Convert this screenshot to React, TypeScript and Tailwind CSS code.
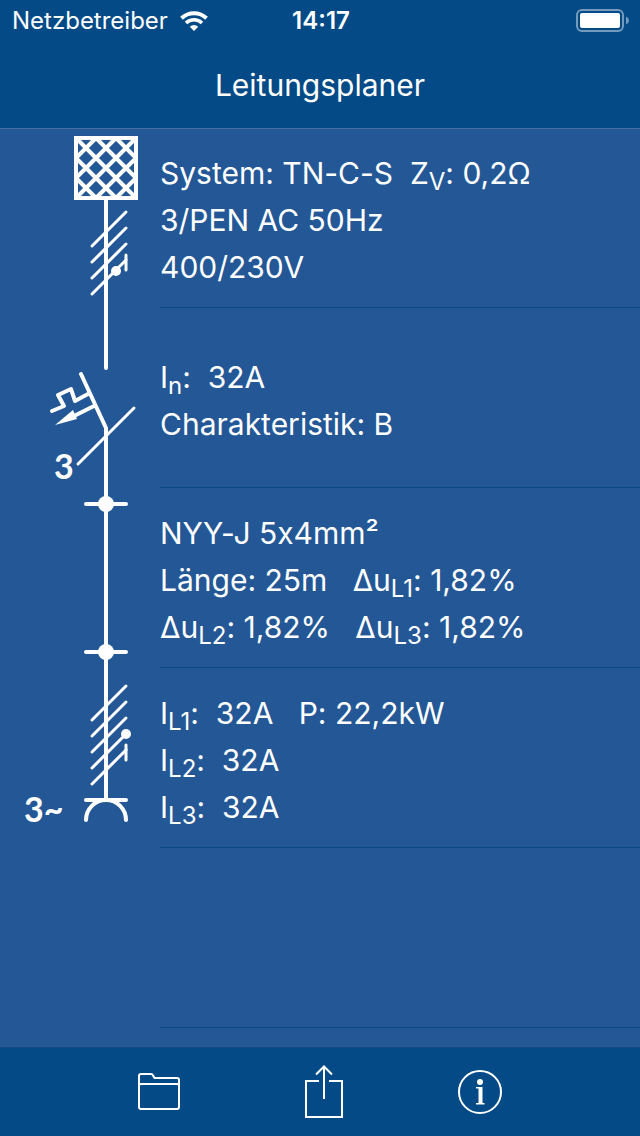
import type { ReactNode } from "react";

const Sub = ({ children }: { children: ReactNode }) => (
  <sub className="text-[24px]">{children}</sub>
);

const Node = ({ y }: { y: number }) => (
  <>
    <line x1="86" y1={y} x2="126" y2={y} />
    <circle cx="106" cy={y} r="8" fill="currentColor" stroke="none" />
  </>
);

// parallel strokes across the wire, one for each conductor
const Slashes = ({ from, count }: { from: number; count: number }) => (
  <g strokeWidth="3">
    {Array.from({ length: count }, (_, i) => (
      <line key={i} x1="92" y1={from + 34 + i * 16} x2="126" y2={from + i * 16} />
    ))}
  </g>
);

const GridSymbol = () => (
  <>
    <rect x="76" y="10" width="60" height="60" strokeLinejoin="miter" />
    <path
      strokeLinecap="butt"
      d="M96 10L76 30M116 10L76 50M136 10L76 70M136 30L96 70M136 50L116 70M116 10L136 30M96 10L136 50M76 10L136 70M76 30L116 70M76 50L96 70"
    />
    <line x1="106" y1="72" x2="106" y2="180" strokeLinecap="butt" />
    <Slashes from={84} count={4} />
    <circle cx="116" cy="143" r="5" fill="currentColor" stroke="none" />
    <line x1="126" y1="127" x2="126" y2="142" strokeWidth="3" />
  </>
);

const BreakerSymbol = () => (
  <>
    <line x1="106" y1="0" x2="106" y2="60" />
    <path d="M81 66L106 120V180" />
    <path d="M52 103L64 98L58 87L71 81L75 93L88 86" />
    <path d="M94 98L74 108" />
    <path d="M55 117L73 102L77 111Z" fill="currentColor" stroke="none" />
    <line x1="78" y1="156" x2="134" y2="100" strokeWidth="3" />
    <text x="54" y="171" className="font-['Lato',sans-serif] text-[34px] font-bold" fill="currentColor" stroke="none">3</text>
  </>
);

const CableSymbol = () => (
  <>
    <line x1="106" y1="0" x2="106" y2="180" strokeLinecap="butt" />
    <Node y={16} />
    <Node y={164} />
  </>
);

const SocketSymbol = () => (
  <>
    <line x1="106" y1="0" x2="106" y2="132" strokeLinecap="butt" />
    <Slashes from={18} count={5} />
    <circle cx="126" cy="66" r="5" fill="currentColor" stroke="none" />
    <line x1="126" y1="77" x2="126" y2="92" strokeWidth="3" />
    <line x1="86" y1="132" x2="126" y2="132" />
    <path d="M86 152A20 20 0 0 1 126 152" />
    <text x="24" y="154" className="font-['Lato',sans-serif] text-[34px] font-bold" fill="currentColor" stroke="none">3~</text>
  </>
);

const Row = ({ symbol, children }: { symbol?: ReactNode; children?: ReactNode }) => (
  <li className="flex">
    <svg
      viewBox="0 0 160 180"
      className="h-[180px] w-40 shrink-0"
      fill="none"
      stroke="currentColor"
      strokeWidth="4"
      strokeLinecap="round"
      strokeLinejoin="round"
      aria-hidden="true"
    >
      {symbol}
    </svg>
    <div className="flex flex-1 flex-col justify-center whitespace-pre border-b border-[#0a4985] pt-1.5 text-[30px] leading-[47px] [font-feature-settings:'calt'_0]">
      {children}
    </div>
  </li>
);

const WifiIcon = () => (
  <svg viewBox="0 0 28 20" className="h-5 w-7" fill="none" stroke="currentColor" strokeWidth="4" aria-hidden="true">
    <path d="M1.5 7.2A18 18 0 0 1 26.500 7.200" />
    <path d="M6 12A11.500 11.500 0 0 1 22 12" strokeWidth="3.500" />
    <path d="M14 20L9.800 15.800A6 6 0 0 1 18.200 15.800Z" fill="currentColor" stroke="none" />
  </svg>
);

const BatteryIcon = () => (
  <svg viewBox="0 0 54 24" className="h-6 w-[54px]" fill="none" aria-hidden="true">
    <rect x="1" y="1" width="46" height="21" rx="5" stroke="currentColor" strokeOpacity="0.45" strokeWidth="2" />
    <rect x="4" y="4" width="40" height="15" rx="2" fill="currentColor" />
    <path d="M50 7.500Q53 9 53 11.500T50 15.500Z" fill="currentColor" fillOpacity="0.45" />
  </svg>
);

export default function App() {
  return (
    <div className="flex min-h-screen flex-col bg-[#235796] font-['Chalkboard_SE','Inter',sans-serif] text-white">
      <header className="relative bg-[#034a86] shadow-[0_1px_0_#436fa5]">
        <div className="grid h-[42px] grid-cols-[1fr_auto_1fr] items-center pl-3 pr-2.5 font-['Inter',sans-serif] text-2xl">
          <div className="flex items-center gap-3">
            <span>Netzbetreiber</span>
            <WifiIcon />
          </div>
          <time className="font-semibold">14:17</time>
          <div className="flex justify-end">
            <BatteryIcon />
          </div>
        </div>
        <h1 className="flex h-[86px] items-center justify-center text-[30px]">Leitungsplaner</h1>
      </header>

      <main className="flex-1">
        <ul>
          <Row symbol={<GridSymbol />}>
            <p>System: TN-C-S  Z<Sub>V</Sub>: 0,2Ω</p>
            <p>3/PEN AC 50Hz</p>
            <p>400/230V</p>
          </Row>
          <Row symbol={<BreakerSymbol />}>
            <p>I<Sub>n</Sub>:  32A</p>
            <p>Charakteristik: B</p>
          </Row>
          <Row symbol={<CableSymbol />}>
            <p>NYY-J 5x4mm²</p>
            <p>Länge: 25m   Δu<Sub>L1</Sub>: 1,82%</p>
            <p>Δu<Sub>L2</Sub>: 1,82%   Δu<Sub>L3</Sub>: 1,82%</p>
          </Row>
          <Row symbol={<SocketSymbol />}>
            <p>I<Sub>L1</Sub>:  32A   P: 22,2kW</p>
            <p>I<Sub>L2</Sub>:  32A</p>
            <p>I<Sub>L3</Sub>:  32A</p>
          </Row>
          <Row />
        </ul>
      </main>

      <footer className="flex h-[89px] items-center justify-between border-t border-[#114a82] bg-[#034a86] pl-[21.5%] pr-[21.5%]">
        <button type="button" aria-label="Öffnen">
          <svg viewBox="0 0 52 54" className="h-[54px] w-[52px]" fill="none" stroke="currentColor" strokeWidth="2">
            <path d="M1 42V11Q1 9 3 9H13Q14.500 9 15 10.500L16.500 13H39Q41 13 41 15V42Q41 44 39 44H3Q1 44 1 42ZM1 21Q1 19 3 19H39Q41 19 41 21" />
          </svg>
        </button>
        <button type="button" aria-label="Teilen">
          <svg viewBox="0 0 38 54" className="h-[54px] w-[38px]" fill="none" stroke="currentColor" strokeWidth="2">
            <path d="M14 16H1V52H37V16H24M19 34V2M11 9.500L19 1.500L27 9.500" />
          </svg>
        </button>
        <button type="button" aria-label="Info">
          <svg viewBox="0 0 44 54" className="h-[54px] w-11" fill="none" stroke="currentColor" strokeWidth="2">
            <circle cx="22" cy="27" r="21" />
            <circle cx="22" cy="17" r="3" fill="currentColor" stroke="none" />
            <path d="M18 22H24.500V38H26.500V39.500H18V38H20.500V23.500H18Z" fill="currentColor" stroke="none" />
          </svg>
        </button>
      </footer>
    </div>
  );
}
